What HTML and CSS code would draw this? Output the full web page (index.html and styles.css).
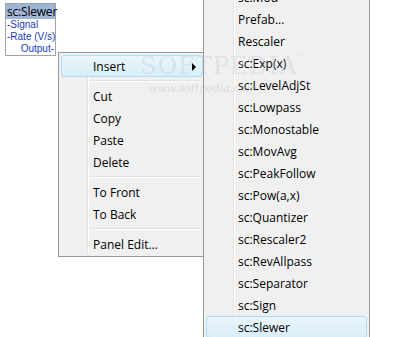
FILE: index.html
```html
<!DOCTYPE html>
<html lang="en">
<head>
    <meta charset="UTF-8">
    <title>Panel editor</title>
    <link rel="stylesheet" href="styles.css">
</head>
<body>
    <div class="canvas">
        <div class="node">
            <div class="node-title">sc:Slewer</div>
            <div class="node-pin">-Signal</div>
            <div class="node-pin">-Rate (V/s)</div>
            <div class="node-pin out">Output-</div>
        </div>

        <div class="menu main-menu">
            <div class="item active">Insert<span class="arrow"></span></div>
            <div class="sep"></div>
            <div class="item">Cut</div>
            <div class="item">Copy</div>
            <div class="item">Paste</div>
            <div class="item">Delete</div>
            <div class="sep"></div>
            <div class="item">To Front</div>
            <div class="item">To Back</div>
            <div class="sep"></div>
            <div class="item">Panel Edit...</div>
        </div>

        <div class="menu sub-menu">
            <div class="item">sc:Mod</div>
            <div class="item">Prefab...</div>
            <div class="item">Rescaler</div>
            <div class="item">sc:Exp(x)</div>
            <div class="item">sc:LevelAdjSt</div>
            <div class="item">sc:Lowpass</div>
            <div class="item">sc:Monostable</div>
            <div class="item">sc:MovAvg</div>
            <div class="item">sc:PeakFollow</div>
            <div class="item">sc:Pow(a,x)</div>
            <div class="item">sc:Quantizer</div>
            <div class="item">sc:Rescaler2</div>
            <div class="item">sc:RevAllpass</div>
            <div class="item">sc:Separator</div>
            <div class="item">sc:Sign</div>
            <div class="item active">sc:Slewer</div>
        </div>

        <div class="watermark">SOFTPEDIA<span class="tm">™</span></div>
        <div class="watermark-url">www.softpedia.com</div>
    </div>
</body>
</html>
```

FILE: styles.css
```css
html, body { margin: 0; padding: 0; }
body { background: #fff; font-family: "Open Sans", "Noto Sans", sans-serif; font-size: 12px; color: #000; }
.canvas { position: relative; width: 407px; height: 337px; overflow: hidden; }

.node { position: absolute; left: 5px; top: 3px; width: 49px; border: 1px solid #a3a3a3; background: #fff; }
.node-title { background: #9fb5d6; color: #000; font-size: 12px; line-height: 15px; height: 15px; padding-left: 1px; letter-spacing: -0.2px; white-space: nowrap; }
.node-pin { color: #1a3cc0; font-family: "Liberation Sans", Arial, sans-serif; font-size: 10px; line-height: 12px; height: 12px; padding-left: 1px; white-space: nowrap; }
.node-pin.out { text-align: right; padding-right: 1px; }

.menu { position: absolute; background: #f0f0f0; border: 1px solid #979797; padding: 2px; box-sizing: border-box; }
.menu::before { content: ""; position: absolute; top: 2px; bottom: 2px; border-left: 1px solid #e2e3e3; border-right: 1px solid #fff; }
.menu .item { position: relative; height: 22px; line-height: 22px; white-space: nowrap; border: 1px solid transparent; border-radius: 3px; box-sizing: border-box; }
.menu .item.active { background: linear-gradient(#eaf5fb, #d9eef8); border-color: #aedcf1; }
.menu .sep { height: 8px; position: relative; }
.menu .sep::after { content: ""; position: absolute; top: 3px; right: 1px; height: 0; border-top: 1px solid #e0e0e0; border-bottom: 1px solid #fff; }

.main-menu { left: 58px; top: 52px; width: 148px; height: 205px; }
.main-menu::before { left: 28px; }
.main-menu .item { padding-left: 31px; }
.main-menu .sep::after { left: 29px; }
.arrow { position: absolute; right: 6px; top: 7px; width: 0; height: 0; border-top: 4px solid transparent; border-bottom: 4px solid transparent; border-left: 4px solid #000; }

.sub-menu { left: 203px; top: -17px; width: 167px; height: 370px; }
.sub-menu::before { left: 29px; }
.sub-menu .item { padding-left: 31px; }

.watermark { position: absolute; left: 140px; top: 52px; font-family: "DejaVu Serif", serif; font-size: 24px; letter-spacing: 1px; color: rgba(190, 200, 210, 0.35); pointer-events: none; }
.watermark .tm { font-size: 9px; vertical-align: top; }
.watermark-url { position: absolute; left: 148px; top: 82px; font-family: "DejaVu Serif", serif; font-style: italic; font-size: 11px; color: rgba(180, 180, 180, 0.35); pointer-events: none; }
```
